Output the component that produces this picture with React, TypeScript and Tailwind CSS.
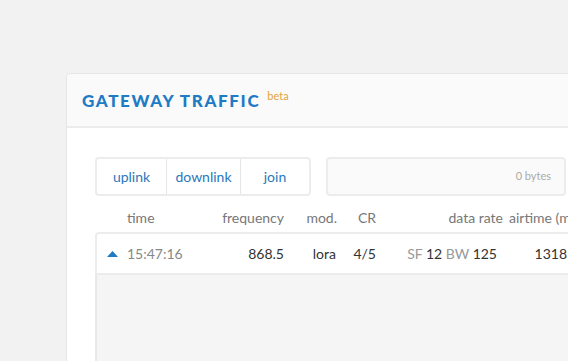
import { ReactNode } from "react"

function Cell({ w, className = "", children }: { w: string; className?: string; children?: ReactNode }) {
  return <div className={`${w} shrink-0 whitespace-nowrap ${className}`}>{children}</div>
}

export default function App() {
  return (
    <div className="w-[568px] h-[361px] overflow-hidden bg-[#f2f2f2] font-['Lato',sans-serif]">
      <div className="ml-[66px] mt-[73px] w-[620px] h-[320px] bg-white border border-[#e6e6e6] rounded-[4px] flex flex-col">
        {/* header */}
        <div className="h-[54px] shrink-0 bg-[#fafafa] border-b-2 border-[#ececec] rounded-t-[4px] flex items-center pl-[15px]">
          <h1 className="text-[17px] leading-none font-black tracking-[1.65px] text-[#1e7bc5] mt-[1px]">GATEWAY TRAFFIC</h1>
          <span className="text-[11px] leading-none text-[#e4a437] ml-[7px] -mt-[10px]">beta</span>
        </div>

        {/* body */}
        <div className="flex-1 flex flex-col pl-[28px] pt-[29px]">
          {/* controls */}
          <div className="flex h-[39px]">
            <div className="flex w-[216px] border-2 border-[#ececec] rounded-[4px] text-[14px] text-[#2a78bb]">
              <button className="w-[69px] flex items-center justify-center">uplink</button>
              <button className="w-[74px] flex items-center justify-center border-l border-[#e6e6e6]">downlink</button>
              <button className="flex-1 flex items-center justify-center border-l border-[#e6e6e6]">join</button>
            </div>
            <div className="ml-[15px] w-[240px] bg-[#fafafa] border-2 border-[#ececec] rounded-[4px] flex items-center justify-end pr-[13px] text-[11px] text-[#aaaaaa]">
              0 bytes
            </div>
            <div className="ml-[2px] w-[60px] border-2 border-[#ececec] rounded-[4px]" />
          </div>

          {/* table header */}
          <div className="flex h-[36px] items-end pb-[4px] text-[14px] text-[#777777]">
            <Cell w="w-[32px]" />
            <Cell w="w-[73px]">time</Cell>
            <Cell w="w-[84px]" className="text-right">frequency</Cell>
            <Cell w="w-[53px]" className="text-right">mod.</Cell>
            <Cell w="w-[39px]" className="text-right">CR</Cell>
            <Cell w="w-[127px]" className="text-right">data rate</Cell>
            <Cell w="w-[80px]" className="pl-[6px]">airtime (ms)</Cell>
          </div>

          {/* row */}
          <div className="flex h-[43px] items-center border-2 border-[#ececec] rounded-t-[4px] text-[14px] text-[#333333]">
            <Cell w="w-[30px]" className="flex justify-center pl-[1px]">
              <svg width="11" height="6" viewBox="0 0 11 6">
                <polygon points="5.5,0 11,6 0,6" fill="#1e7bc5" />
              </svg>
            </Cell>
            <Cell w="w-[73px]" className="text-[#888888]">15:47:16</Cell>
            <Cell w="w-[84px]" className="text-right">868.5</Cell>
            <Cell w="w-[53px]" className="text-right pr-[1px]">lora</Cell>
            <Cell w="w-[39px]" className="text-right">4/5</Cell>
            <Cell w="w-[127px]" className="text-right pr-[6px]">
              <span className="text-[#999999]">SF</span> 12 <span className="text-[#999999]">BW</span> 125
            </Cell>
            <Cell w="w-[64px]" className="text-right">1318</Cell>
          </div>

          {/* empty list area */}
          <div className="flex-1 bg-[#f5f5f5] border-l-2 border-[#e8e8e8]" />
        </div>
      </div>
    </div>
  )
}
